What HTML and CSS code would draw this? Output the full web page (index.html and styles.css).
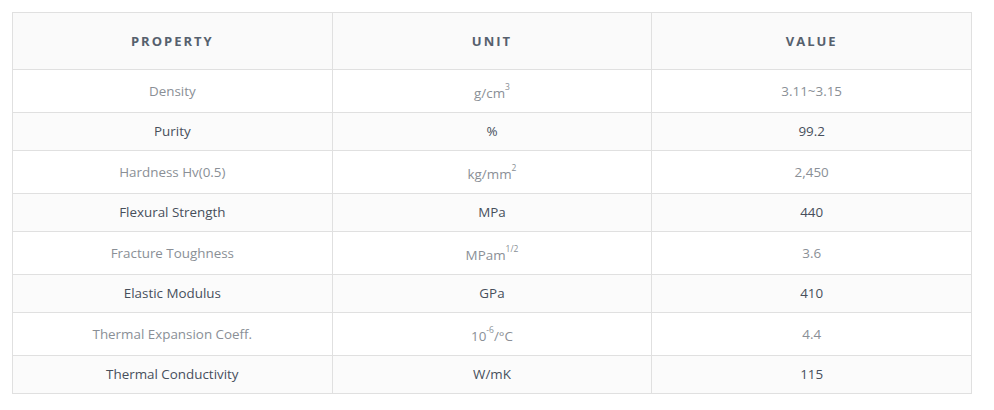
FILE: index.html
```html
<!DOCTYPE html>
<html>
<head>
<meta charset="utf-8">
<link rel="stylesheet" href="styles.css">
</head>
<body>
<div class="wrap">
<table class="spec">
<thead>
<tr><th>Property</th><th>Unit</th><th>Value</th></tr>
</thead>
<tbody>
<tr class="odd"><td>Density</td><td>g/cm<sup>3</sup></td><td>3.11~3.15</td></tr>
<tr class="even"><td>Purity</td><td>%</td><td>99.2</td></tr>
<tr class="odd"><td>Hardness Hv(0.5)</td><td>kg/mm<sup>2</sup></td><td>2,450</td></tr>
<tr class="even"><td>Flexural Strength</td><td>MPa</td><td>440</td></tr>
<tr class="odd"><td>Fracture Toughness</td><td>MPam<sup>1/2</sup></td><td>3.6</td></tr>
<tr class="even"><td>Elastic Modulus</td><td>GPa</td><td>410</td></tr>
<tr class="odd"><td>Thermal Expansion Coeff.</td><td>10<sup>-6</sup>/°C</td><td>4.4</td></tr>
<tr class="even"><td>Thermal Conductivity</td><td>W/mK</td><td>115</td></tr>
</tbody>
</table>
</div>
</body>
</html>
```
FILE: styles.css
```css
html, body {
  margin: 0;
  padding: 0;
  background: #ffffff;
}
.wrap {
  padding: 12px;
}
.spec {
  width: 960px;
  border-collapse: collapse;
  table-layout: fixed;
  font-family: "Open Sans", "Liberation Sans", sans-serif;
  font-size: 13.4px;
}
.spec th, .spec td {
  border: 1px solid #e0e0e0;
  text-align: center;
  vertical-align: middle;
}
.spec th {
  background: #fafafa;
  color: #56606d;
  font-weight: 700;
  font-size: 13px;
  text-transform: uppercase;
  letter-spacing: 2px;
  padding: 20px 10px;
  line-height: 16px;
}
.spec td {
  padding: 10px;
  line-height: 17px;
}
.spec tr.odd td {
  color: #8a8f96;
  background: #ffffff;
}
.spec tr.even td {
  color: #474f5b;
  background: #fbfbfb;
}
.spec sup {
  font-size: 8.5px;
  line-height: 14px;
  vertical-align: 8px;
}
```
